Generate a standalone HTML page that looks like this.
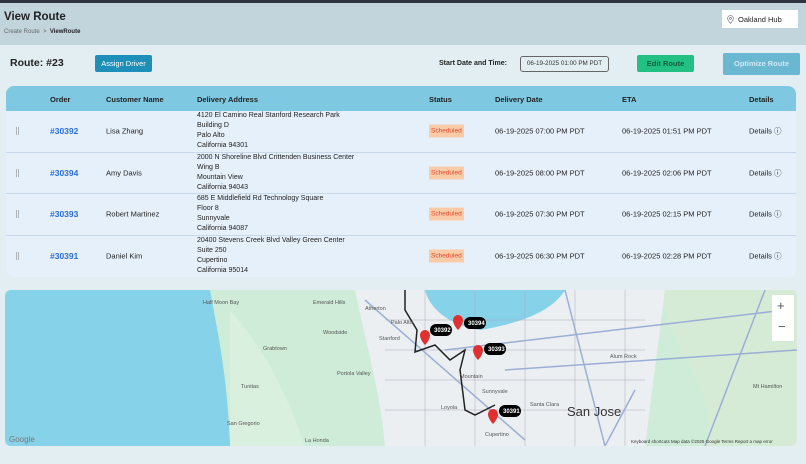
<!DOCTYPE html>
<html><head><meta charset="utf-8"><style>
*{margin:0;padding:0;box-sizing:border-box}
body{width:806px;height:464px;overflow:hidden;background:#e2eef2;font-family:"Liberation Sans",sans-serif;color:#222;position:relative}
.a{position:absolute;white-space:nowrap}
.hdr{left:0;top:0;width:806px;height:45px;background:#c2d5dc;border-top:3px solid #2e3440}
.tbl{left:6px;top:86px;width:790px;height:191px;background:#e6f0fb;border-radius:8px;overflow:hidden}
.th{position:absolute;left:0;top:0;width:790px;height:25px;background:#7ec8e1;font-size:7.5px;font-weight:bold}
.row{position:absolute;left:0;width:790px;height:41.5px;border-bottom:1px solid #c8d8ec;font-size:7.5px}
.row .a{top:50%;transform:translateY(-50%)}
.addr{line-height:10px;font-size:7px}
.st{background:#fbcba8;color:#e0462c;font-size:6.5px;padding:3px 2px}
.ord{color:#2a6fd8;font-weight:bold;font-size:8.5px}
.grip{width:3px;height:7px;border-left:1px dotted #777;border-right:1px dotted #777}
</style></head><body>
<div class="a hdr"></div>
<div class="a" style="left:4px;top:11px;font-size:11.5px;font-weight:bold">View Route</div>
<div class="a" style="left:4px;top:29px;font-size:6px;color:#666">Create Route &nbsp;&gt;&nbsp; <b style="color:#222">ViewRoute</b></div>
<div class="a" style="left:722px;top:10px;width:76px;height:18px;background:#fff;font-size:7.5px;padding:5px 0 0 16px">Oakland Hub</div>
<svg class="a" style="left:727px;top:15px" width="7" height="9" viewBox="0 0 7 9"><path d="M3.5 8.5C1 5.5 .6 4.5.6 3.4a2.9 2.9 0 0 1 5.8 0c0 1.1-.4 2.1-2.9 5.1z" fill="none" stroke="#888" stroke-width=".8"/><circle cx="3.5" cy="3.4" r="1" fill="none" stroke="#888" stroke-width=".7"/></svg>

<div class="a" style="left:10px;top:57px;font-size:10.5px;font-weight:bold">Route: #23</div>
<div class="a" style="left:95px;top:55px;width:57px;height:17px;background:#1d8fb9;color:#fff;border-radius:2px;font-size:7.5px;text-align:center;line-height:17px">Assign Driver</div>
<div class="a" style="left:439px;top:60px;font-size:7px;font-weight:bold">Start Date and Time:</div>
<div class="a" style="left:520px;top:56px;width:89px;height:16px;border:1px solid #666;border-radius:3px;font-size:6.3px;text-align:center;line-height:14px;color:#333">06-19-2025 01:00 PM PDT</div>
<div class="a" style="left:637px;top:55px;width:57px;height:17px;background:#22c083;border-radius:2px;font-size:7.5px;font-weight:bold;text-align:center;line-height:17px;color:#145c40">Edit Route</div>
<div class="a" style="left:723px;top:53px;width:77px;height:22px;background:#6ab7d2;border-radius:2px;font-size:7.5px;font-weight:bold;text-align:center;line-height:22px;color:#cfe9f2">Optimize Route</div>

<div class="a tbl">
<div class="th">
<span class="a" style="left:44px;top:9px">Order</span>
<span class="a" style="left:100px;top:9px">Customer Name</span>
<span class="a" style="left:191px;top:9px">Delivery Address</span>
<span class="a" style="left:423px;top:9px">Status</span>
<span class="a" style="left:489px;top:9px">Delivery Date</span>
<span class="a" style="left:616px;top:9px">ETA</span>
<span class="a" style="left:743px;top:9px">Details</span>
</div>
<div class="row" style="top:25px"><span class="a grip" style="left:10px"></span><span class="a ord" style="left:44px">#30392</span><span class="a" style="left:100px">Lisa Zhang</span><span class="a addr" style="left:191px">4120 El Camino Real Stanford Research Park<br>Building D<br>Palo Alto<br>California 94301</span><span class="a st" style="left:423px">Scheduled</span><span class="a" style="left:489px">06-19-2025 07:00 PM PDT</span><span class="a" style="left:616px">06-19-2025 01:51 PM PDT</span><span class="a" style="left:743px">Details ⓘ</span></div>
<div class="row" style="top:66.5px"><span class="a grip" style="left:10px"></span><span class="a ord" style="left:44px">#30394</span><span class="a" style="left:100px">Amy Davis</span><span class="a addr" style="left:191px">2000 N Shoreline Blvd Crittenden Business Center<br>Wing B<br>Mountain View<br>California 94043</span><span class="a st" style="left:423px">Scheduled</span><span class="a" style="left:489px">06-19-2025 08:00 PM PDT</span><span class="a" style="left:616px">06-19-2025 02:06 PM PDT</span><span class="a" style="left:743px">Details ⓘ</span></div>
<div class="row" style="top:108px"><span class="a grip" style="left:10px"></span><span class="a ord" style="left:44px">#30393</span><span class="a" style="left:100px">Robert Martinez</span><span class="a addr" style="left:191px">685 E Middlefield Rd Technology Square<br>Floor 8<br>Sunnyvale<br>California 94087</span><span class="a st" style="left:423px">Scheduled</span><span class="a" style="left:489px">06-19-2025 07:30 PM PDT</span><span class="a" style="left:616px">06-19-2025 02:15 PM PDT</span><span class="a" style="left:743px">Details ⓘ</span></div>
<div class="row" style="top:149.5px;border:0"><span class="a grip" style="left:10px"></span><span class="a ord" style="left:44px">#30391</span><span class="a" style="left:100px">Daniel Kim</span><span class="a addr" style="left:191px">20400 Stevens Creek Blvd Valley Green Center<br>Suite 250<br>Cupertino<br>California 95014</span><span class="a st" style="left:423px">Scheduled</span><span class="a" style="left:489px">06-19-2025 06:30 PM PDT</span><span class="a" style="left:616px">06-19-2025 02:28 PM PDT</span><span class="a" style="left:743px">Details ⓘ</span></div>
</div>

<svg class="a" style="left:5px;top:290px;border-radius:6px" width="792" height="156" viewBox="0 0 792 156">
<rect width="792" height="156" fill="#cfecd8"/>
<path d="M0 0H205C212 40 222 80 225 156H0z" fill="#86d2e9"/>
<path d="M225 20C260 60 280 100 300 156H225z" fill="#d9f0de"/>
<path d="M350 0H660L640 156H380C375 100 360 50 350 0z" fill="#eceff2"/>
<path d="M660 0H792V156H700C720 100 650 40 660 0z" fill="#d6ebd6"/>
<path d="M420 0H560C545 25 505 35 475 40 445 35 425 20 420 0z" fill="#86d2e9"/>
<g stroke="#9aaed6" stroke-width="1.5" fill="none"><path d="M360 10L520 150M440 60L780 20M500 80L792 60M560 0L600 156M700 156L760 0M600 156L630 100"/></g>
<g stroke="#aab" stroke-width=".5" fill="none"><path d="M380 30h260M380 60h260M380 90h260M380 120h260M420 0v156M470 0v156M520 0v156M570 0v156M620 0v156"/></g>
<path d="M400 0V20L412 40 410 62 430 55 445 70 460 60 455 80 460 120 470 125 490 115" stroke="#222" stroke-width="1.5" fill="none"/>
<g fill="#e03030"><path d="M420 40a5 5 0 0 1 10 0c0 5-5 10-5 10s-5-5-5-10z" transform="translate(-5 5)"/><path d="M448 30a5 5 0 0 1 10 0c0 5-5 10-5 10s-5-5-5-10z"/><path d="M468 60a5 5 0 0 1 10 0c0 5-5 10-5 10s-5-5-5-10z"/><path d="M483 124a5 5 0 0 1 10 0c0 5-5 10-5 10s-5-5-5-10z"/></g>
<g fill="#000"><rect x="425" y="34" width="22" height="12" rx="6"/><rect x="459" y="27" width="22" height="12" rx="6"/><rect x="479" y="53" width="22" height="12" rx="6"/><rect x="494" y="115" width="22" height="12" rx="6"/></g>
<g fill="#fff" font-size="6" font-weight="bold" font-family="Liberation Sans"><text x="429" y="42">30392</text><text x="463" y="35">30394</text><text x="483" y="61">30393</text><text x="498" y="123">30391</text></g>
<g fill="#555" font-size="5.5" font-family="Liberation Sans"><text x="308" y="14">Emerald Hills</text><text x="360" y="20">Atherton</text><text x="386" y="34">Palo Alto</text><text x="374" y="50">Stanford</text><text x="318" y="44">Woodside</text><text x="258" y="60">Grabtown</text><text x="332" y="85">Portola Valley</text><text x="236" y="98">Tunitas</text><text x="455" y="88">Mountain</text><text x="477" y="103">Sunnyvale</text><text x="525" y="116">Santa Clara</text><text x="436" y="119">Loyola</text><text x="222" y="135">San Gregorio</text><text x="300" y="152">La Honda</text><text x="480" y="146">Cupertino</text><text x="605" y="68">Alum Rock</text><text x="748" y="98">Mt Hamilton</text><text x="198" y="14">Half Moon Bay</text></g>
<text x="562" y="126" font-size="13" fill="#333" font-family="Liberation Sans">San Jose</text>
<text x="4" y="152" font-size="8" fill="#777" font-family="Liberation Sans">Google</text>
<text x="626" y="153" font-size="4.5" fill="#333" font-family="Liberation Sans">Keyboard shortcuts   Map data ©2025 Google   Terms   Report a map error</text>
<rect x="767" y="5" width="22" height="46" fill="#fff"/>
<text x="772" y="20" font-size="13" fill="#555" font-family="Liberation Sans">+</text>
<text x="773" y="41" font-size="13" fill="#555" font-family="Liberation Sans">−</text>
</svg>
</body></html>
